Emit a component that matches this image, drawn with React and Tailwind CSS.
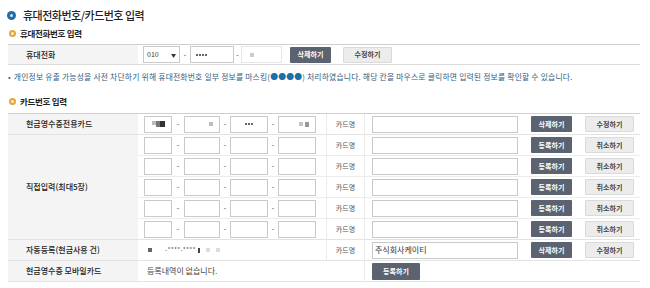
import React from 'react';

const font = { fontFamily: '"Noto Sans CJK KR", "Noto Sans", sans-serif' };

// 제목 앞 원형 아이콘
const Dot = ({ color, size = 'w-[9px] h-[9px]' }) => (
  <span className={`inline-flex items-center justify-center rounded-full ${size} ${color}`}>
    <span className="w-[3px] h-[3px] rounded-full bg-white/80" />
  </span>
);

const DarkBtn = ({ children, w = 'w-[41px]' }) => (
  <button className={`${w} h-[16px] bg-[#5b6370] text-white text-[7px] font-bold leading-none rounded-[1px]`}>
    {children}
  </button>
);

const LightBtn = ({ children }) => (
  <button className="w-[49px] h-[16px] bg-[#ececec] border border-[#dadada] text-[#444] text-[7px] font-bold leading-none rounded-[1px]">
    {children}
  </button>
);

const Box = ({ w, children, className = '' }) => (
  <div className={`${w} h-[17px] border border-[#c9c9c9] bg-white flex items-center justify-center ${className}`}>
    {children}
  </div>
);

const Dash = ({ w = 'w-[10px]' }) => (
  <span className={`${w} text-center text-[8px] text-[#555] leading-none`}>-</span>
);

const Dots = ({ n }) => (
  <span className="flex gap-[1px]">
    {Array.from({ length: n }).map((_, i) => (
      <span key={i} className="w-[2px] h-[2px] rounded-full bg-[#333]" />
    ))}
  </span>
);

const CardInputs = ({ first }) => (
  <div className="flex items-center pl-[6px]">
    <Box w="w-[28px]">
      {first && (
        <div className="flex">
          <span className="w-[4px] h-[4px] bg-[#bbb]" />
          <span className="w-[4px] h-[6px] bg-[#777]" />
          <span className="w-[5px] h-[6px] bg-[#333]" />
        </div>
      )}
    </Box>
    <Dash w="w-[12px]" />
    <Box w="w-[36px]" className={first ? 'bg-[#f0f0f0] justify-end pr-[6px]' : ''}>
      {first && <span className="w-[4px] h-[4px] bg-[#bdbdbd]" />}
    </Box>
    <Dash />
    <Box w="w-[38px]">{first && <Dots n={3} />}</Box>
    <Dash />
    <Box w="w-[38px]" className={first ? 'bg-[#eef0f2] justify-end pr-[6px] gap-[2px]' : ''}>
      {first && (
        <>
          <span className="w-[4px] h-[4px] bg-[#c4c4c4]" />
          <span className="w-[4px] h-[5px] bg-[#999]" />
        </>
      )}
    </Box>
  </div>
);

const cell = 'h-[21px] border-b border-[#e3e3e3] flex items-center';
const label = 'bg-[#f4f4f4] border-b border-[#e3e3e3] pl-[18px] text-[8px] text-[#222] font-medium flex items-center';

export default function App() {
  const directRows = [0, 1, 2, 3, 4];
  return (
    <div className="w-[650px] h-[288px] bg-white text-[#444] overflow-hidden" style={font}>
      {/* 메인 타이틀 */}
      <div className="mt-[8px] h-[14px] pl-[7px] flex items-center gap-[7px]">
        <Dot color="bg-[#1f6ea6]" />
        <h1 className="text-[11px] font-medium text-[#222] tracking-[-0.5px]">휴대전화번호/카드번호 입력</h1>
      </div>

      {/* 휴대전화번호 입력 */}
      <div className="mt-[4px] h-[14px] pl-[9px] flex items-center gap-[4px]">
        <Dot color="bg-[#e6a43c]" size="w-[7px] h-[7px]" />
        <h2 className="text-[8.5px] font-bold text-[#222] tracking-[-0.3px]">휴대전화번호 입력</h2>
      </div>

      <div className="mt-[4px] ml-[8px] w-[632px] border-t border-[#cfcfcf] border-b border-b-[#dcdcdc] grid grid-cols-[130px_1fr] h-[21px]">
        <div className="bg-[#f4f4f4] pl-[18px] text-[8px] text-[#222] font-medium flex items-center">휴대전화</div>
        <div className="flex items-center pl-[5px]">
          <div className="w-[37px] h-[17px] border border-[#c9c9c9] flex items-center justify-between px-[3px] text-[7px] text-[#333]">
            <span>010</span>
            <span className="text-[5px]">▼</span>
          </div>
          <Dash />
          <Box w="w-[44px]" className="justify-start pl-[5px]">
            <Dots n={4} />
          </Box>
          <Dash w="w-[7px]" />
          <Box w="w-[41px]" className="border-[#e6e6e6] justify-start pl-[8px]">
            <span className="w-[4px] h-[4px] bg-[#ccc]" />
          </Box>
          <div className="ml-[8px] flex gap-[12px]">
            <DarkBtn>삭제하기</DarkBtn>
            <LightBtn>수정하기</LightBtn>
          </div>
        </div>
      </div>

      {/* 안내 문구 */}
      <p className="mt-[6px] h-[12px] pl-[8px] flex items-center text-[7.8px] text-[#2f5d80] tracking-[0.2px] whitespace-nowrap">
        <span className="text-[#1f6ea6] mr-[3px]">•</span>
        개인정보 유출 가능성을 사전 차단하기 위해 휴대전화번호 일부 정보를 마스킹(
        <span className="text-[#1f6ea6]">●●●●</span>) 처리하였습니다. 해당 칸을 마우스로 클릭하면 입력된 정보를 확인할 수 있습니다.
      </p>

      {/* 카드번호 입력 */}
      <div className="mt-[11px] h-[14px] pl-[9px] flex items-center gap-[4px]">
        <Dot color="bg-[#e6a43c]" size="w-[7px] h-[7px]" />
        <h2 className="text-[8.5px] font-bold text-[#222] tracking-[-0.3px]">카드번호 입력</h2>
      </div>

      <div className="mt-[5px] ml-[8px] w-[632px] border-t border-[#cfcfcf] grid grid-cols-[130px_189px_38px_1fr] grid-rows-[repeat(8,21px)]">
        {/* 현금영수증전용카드 */}
        <div className={label}>현금영수증전용카드</div>
        <div className={`${cell} border-r border-r-[#ebebeb]`}><CardInputs first /></div>
        <div className={`${cell} border-r border-r-[#ebebeb] justify-center text-[7px] text-[#555]`}>카드명</div>
        <div className={`${cell} pl-[7px]`}>
          <Box w="w-[146px]" />
          <div className="ml-[13px] flex gap-[13px]">
            <DarkBtn>삭제하기</DarkBtn>
            <LightBtn>수정하기</LightBtn>
          </div>
        </div>

        {/* 직접입력 */}
        <div className={`${label} row-span-5`}>직접입력(최대5장)</div>
        {directRows.map((i) => (
          <React.Fragment key={i}>
            <div className={`${cell} border-r border-r-[#ebebeb] ${i < 4 ? 'border-b-[#ececec]' : ''}`}><CardInputs /></div>
            <div className={`${cell} border-r border-r-[#ebebeb] justify-center text-[7px] text-[#555] ${i < 4 ? 'border-b-[#ececec]' : ''}`}>카드명</div>
            <div className={`${cell} pl-[7px] ${i < 4 ? 'border-b-[#ececec]' : ''}`}>
              <Box w="w-[146px]" />
              <div className="ml-[13px] flex gap-[13px]">
                <DarkBtn>등록하기</DarkBtn>
                <LightBtn>취소하기</LightBtn>
              </div>
            </div>
          </React.Fragment>
        ))}

        {/* 자동등록 */}
        <div className={label}>자동등록(현금사용 건)</div>
        <div className={`${cell} border-r border-r-[#ebebeb] pl-[10px] gap-[2px]`}>
          <span className="w-[4px] h-[4px] bg-[#666]" />
          <span className="ml-[11px] text-[6.5px] text-[#555] tracking-[0.2px]">-****-****</span>
          <span className="w-[2px] h-[5px] bg-[#444]" />
          <span className="ml-[4px] w-[4px] h-[4px] bg-[#ddd]" />
          <span className="ml-[4px] w-[4px] h-[4px] bg-[#ddd]" />
        </div>
        <div className={`${cell} border-r border-r-[#ebebeb] justify-center text-[7px] text-[#555]`}>카드명</div>
        <div className={`${cell} pl-[7px]`}>
          <Box w="w-[146px]" className="justify-start pl-[2px]">
            <span className="text-[8px] text-[#333] leading-none">주식회사케이티</span>
          </Box>
          <div className="ml-[13px] flex gap-[13px]">
            <DarkBtn>삭제하기</DarkBtn>
            <LightBtn>수정하기</LightBtn>
          </div>
        </div>

        {/* 모바일카드 */}
        <div className={label}>현금영수증 모바일카드</div>
        <div className={`${cell} pl-[9px] col-span-2 border-r border-r-[#ebebeb] text-[8px] text-[#444]`}>등록내역이 없습니다.</div>
        <div className={`${cell} pl-[7px]`}>
          <button className="w-[48px] h-[17px] bg-[#5b6370] text-white text-[7px] font-bold leading-none rounded-[1px]">등록하기</button>
        </div>
      </div>
    </div>
  );
}
